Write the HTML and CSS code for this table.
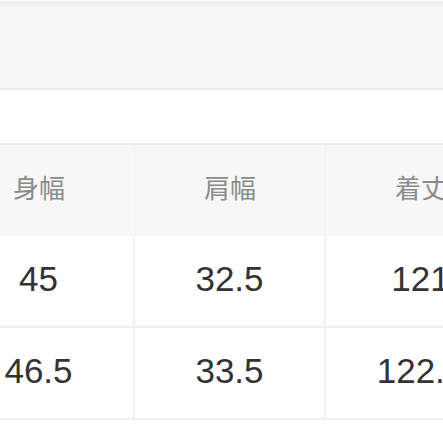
FILE: index.html
```html
<!DOCTYPE html>
<html lang="ja">
<head>
<meta charset="utf-8">
<link rel="stylesheet" href="styles.css">
</head>
<body>
<div class="page">
  <div class="band"></div>
  <div class="gap"></div>
  <div class="table">
    <div class="row head">
      <div class="cell">身幅</div>
      <div class="cell">肩幅</div>
      <div class="cell">着丈</div>
    </div>
    <div class="row">
      <div class="cell">45</div>
      <div class="cell">32.5</div>
      <div class="cell">121</div>
    </div>
    <div class="row">
      <div class="cell">46.5</div>
      <div class="cell">33.5</div>
      <div class="cell">122.5</div>
    </div>
  </div>
</div>
</body>
</html>
```
FILE: styles.css
```css
html, body {
  margin: 0;
  padding: 0;
  background: #ffffff;
  overflow: hidden;
}
.page {
  width: 443px;
  height: 443px;
  overflow: hidden;
  font-family: "Liberation Sans", "Noto Sans CJK JP", sans-serif;
}
.band {
  margin-top: 1px;
  height: 82px;
  background: #f7f7f7;
  border-top: 5px solid #f0f0f0;
  border-bottom: 2px solid #ececec;
}
.gap {
  height: 53px;
}
.table {
  margin-left: -56px;
  width: 573px;
  border-top: 2px solid #ececec;
}
.row {
  display: grid;
  grid-template-columns: 191px 191px 191px;
  height: 90px;
  border-bottom: 2px solid #efefef;
}
.row.head {
  height: 91px;
  background: #f7f7f7;
  border-bottom: none;
}
.cell {
  display: flex;
  align-items: center;
  justify-content: center;
  border-right: 2px solid #f1f1f1;
  font-size: 35px;
  color: #333333;
  padding-top: 0;
}
.head .cell {
  border-right: 1px solid #f0f0f0;
  font-size: 26px;
  color: #8a8a8a;
  font-family: "Noto Sans CJK JP", sans-serif;
  padding-bottom: 8px;
}
.row:not(.head) .cell {
  padding-bottom: 4px;
}
```
